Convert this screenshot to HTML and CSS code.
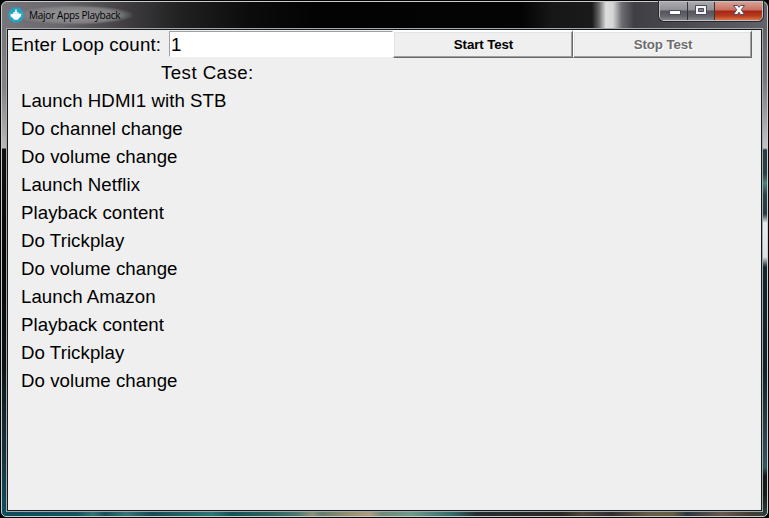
FILE: index.html
```
<!DOCTYPE html>
<html lang="en">
<head>
<meta charset="utf-8">
<title>Major Apps Playback</title>
<link rel="stylesheet" href="styles.css">
</head>
<body>
<div class="window">
  <header class="titlebar">
    <svg class="app-icon" width="16" height="16" viewBox="0 0 16 16">
      <circle cx="8" cy="8" r="7.8" fill="#26a3c2"/>
      <path d="M7.2 2.5h1.5v2.2l2.1 1.2 1 1.1 1.8-.5-.9 3.2-1.6 1.3-1.3 1.8H6.3L4.8 11 2.7 9.3 2.5 6.8l1.8.4L5.4 5.6l1.8-.9z" fill="#fff"/>
      <path d="M5.5 6.5h5" stroke="#b9dfe9" stroke-width=".6"/>
    </svg>
    <span class="title">Major Apps Playback</span>
    <div class="controls">
      <span class="control minimize"><svg width="27" height="18"><rect x="9.5" y="8.5" width="11" height="4" fill="#fff" stroke="#494b60"/></svg></span>
      <span class="control maximize"><svg width="26" height="18"><path d="M7.5 3.5h11v9h-11z" fill="#f4f4f4" stroke="#494b60"/><path d="M10.5 6.5h5v3h-5z" fill="#858187" stroke="#494b60"/></svg></span>
      <span class="control close"><svg width="47" height="18"><path d="M18.5 3.5h4L24 5.3l1.5-1.8h4l-3.3 4.2 3.3 4.8h-4L24 10.3l-1.5 2.2h-4l3.3-4.8z" fill="#fff" stroke="#514b5e"/></svg></span>
    </div>
  </header>
  <main class="client">
    <form class="toolbar">
      <label class="loop-label" for="loop">Enter Loop count:</label>
      <input class="loop-input" id="loop" type="text" value="1">
      <button class="button" type="button">Start Test</button>
      <button class="button stop" type="button" disabled>Stop Test</button>
    </form>
    <h1 class="heading">Test Case:</h1>
    <ul class="cases">
      <li>Launch HDMI1 with STB</li>
      <li>Do channel change</li>
      <li>Do volume change</li>
      <li>Launch Netflix</li>
      <li>Playback content</li>
      <li>Do Trickplay</li>
      <li>Do volume change</li>
      <li>Launch Amazon</li>
      <li>Playback content</li>
      <li>Do Trickplay</li>
      <li>Do volume change</li>
    </ul>
  </main>
</div>
</body>
</html>
```
FILE: styles.css
```
* { box-sizing: border-box; }
body {
  margin: 0;
  padding: 1px;
  height: 518px;
  background: #050505;
  font-family: "Liberation Sans", Arial, sans-serif;
  overflow: hidden;
}
.window {
  width: 767px;
  height: 516px;
  border: 1px solid #c9cccd;
  border-radius: 6px 6px 5px 5px;
  padding: 0 4px 4px;
  background:
    linear-gradient(90deg, #77757a 0, #68666a 60px, #3c3a3d 130px, #202020 180px, #0c0c0c 245px, #030303 310px, #040404 520px, #171717 550px, #1a1a1a 590px, #69696b 597px, #dedede 604px, #d4d4d4 611px, #6b6b70 620px, #3f3f45 632px, #4a4a50 680px, #626268 765px) 0 0 / 100% 27px no-repeat,
    linear-gradient(#77757a, #858385 60px, #bab8b8 119px, #15110f 120px, #080707 230px, #0b1014 330px, #17343f 430px, #0c5261 489px) 0 27px / 5px 100% no-repeat,
    linear-gradient(#626268, #77777c 50px, #c4c5c6 119px, #263b43 121px, #28424a 145px, #4c8377 154px, #28424a 166px, #273b43 185px, #e9edef 194px, #dde1e3 228px, #13262e 238px, #0d222a 340px, #305259 430px, #2f5b60 438px, #171717 447px, #151b18 465px, #33463e 489px) 100% 27px / 5px 487px no-repeat,
    linear-gradient(90deg, #0c4c5a 0, #14545f 75px, #357374 91px, #16505b 103px, #347573 124px, #174b56 150px, #2c7774 210px, #155159 230px, #2e6560 270px, #4c7770 295px, #8d9178 310px, #667d6c 320px, #948f70 345px, #ad9d80 368px, #708a78 380px, #6f9a8a 410px, #326b69 450px, #252d2f 475px, #2b2926 560px, #4e4639 580px, #302d2e 610px, #665d47 646px, #665f43 670px, #2b373c 685px, #695750 720px, #403d31 750px, #33463e 765px);
}
.titlebar { height: 26px; display: flex; align-items: flex-start; }
.app-icon { position: relative; z-index: 1; margin: 5px 0 0 2px; flex: none; }
.title {
  margin: 3px 0 0 -9px;
  padding: 0 14px;
  height: 20px;
  background: radial-gradient(ellipse closest-side, rgba(145,144,147,.95) 35%, rgba(135,134,137,.85) 75%, rgba(120,120,120,0));
  font: 10px/20px "Open Sans", "Noto Sans", sans-serif;
  letter-spacing: -.28px;
  color: #000;
  white-space: nowrap;
}
.controls {
  display: flex;
  margin: -1px 0 0 auto;
  height: 20px;
  border: 1px solid #c1c1c4;
  border-radius: 0 0 5px 5px;
  overflow: hidden;
  box-shadow: 0 0 0 1px #29292d;
}
.control {
  height: 18px;
  background: linear-gradient(#aaa9ad 0, #919096 8px, #55545a 9px, #646369 14px, #85848a 18px);
  border-right: 1px solid #343338;
}
.control svg { display: block; }
.minimize { width: 28px; }
.maximize { width: 27px; }
.close {
  width: 47px;
  border-right: 0;
  background: linear-gradient(#d9a093 0, #c87162 8px, #a72514 9px, #b83c20 14px, #dc7549 18px);
}
.client {
  width: 757px;
  height: 484px;
  border: 1px solid #a6a9ab;
  background: #efefef;
  outline: 1px solid #111b1e;
  outline-offset: -2px;
  padding: 1px;
  color: #000;
}
.toolbar { display: flex; height: 28px; margin: 0; }
.loop-label {
  width: 161px;
  padding-left: 3px;
  font-size: 18.67px;
  line-height: 29px;
  letter-spacing: .17px;
  white-space: nowrap;
}
.loop-input {
  width: 224px;
  height: 26px;
  margin: 1px 0 0;
  padding: 1px 0 0 1px;
  border: 1px solid;
  border-color: #a0a0a0 #fff #fff #a0a0a0;
  border-radius: 0;
  outline: 0;
  background: #fff;
  font: 18.67px "Liberation Sans", Arial, sans-serif;
  color: #000;
}
.button {
  width: 180px;
  height: 28px;
  padding: 0 0 1px 1px;
  border: solid;
  border-width: 2px 1px 1px;
  border-color: #fff #696969 #696969 #fff;
  border-radius: 0;
  background: #efefef;
  box-shadow: inset -1px -1px #a0a0a0, inset 1px 1px #e3e3e3;
  font: bold 13.33px "Liberation Sans", Arial, sans-serif;
  letter-spacing: -.12px;
  color: #000;
}
.stop { width: 179px; color: #6d6d6d; text-shadow: 1px 1px #fff; }
.heading {
  margin: 0 0 0 153px;
  font-weight: 400;
  font-size: 18.67px;
  line-height: 30px;
  height: 28px;
  letter-spacing: .45px;
}
.cases { list-style: none; margin: 0; padding: 0 0 0 13px; font-size: 18.67px; letter-spacing: .06px; }
.cases li { height: 28px; line-height: 30px; }
```
